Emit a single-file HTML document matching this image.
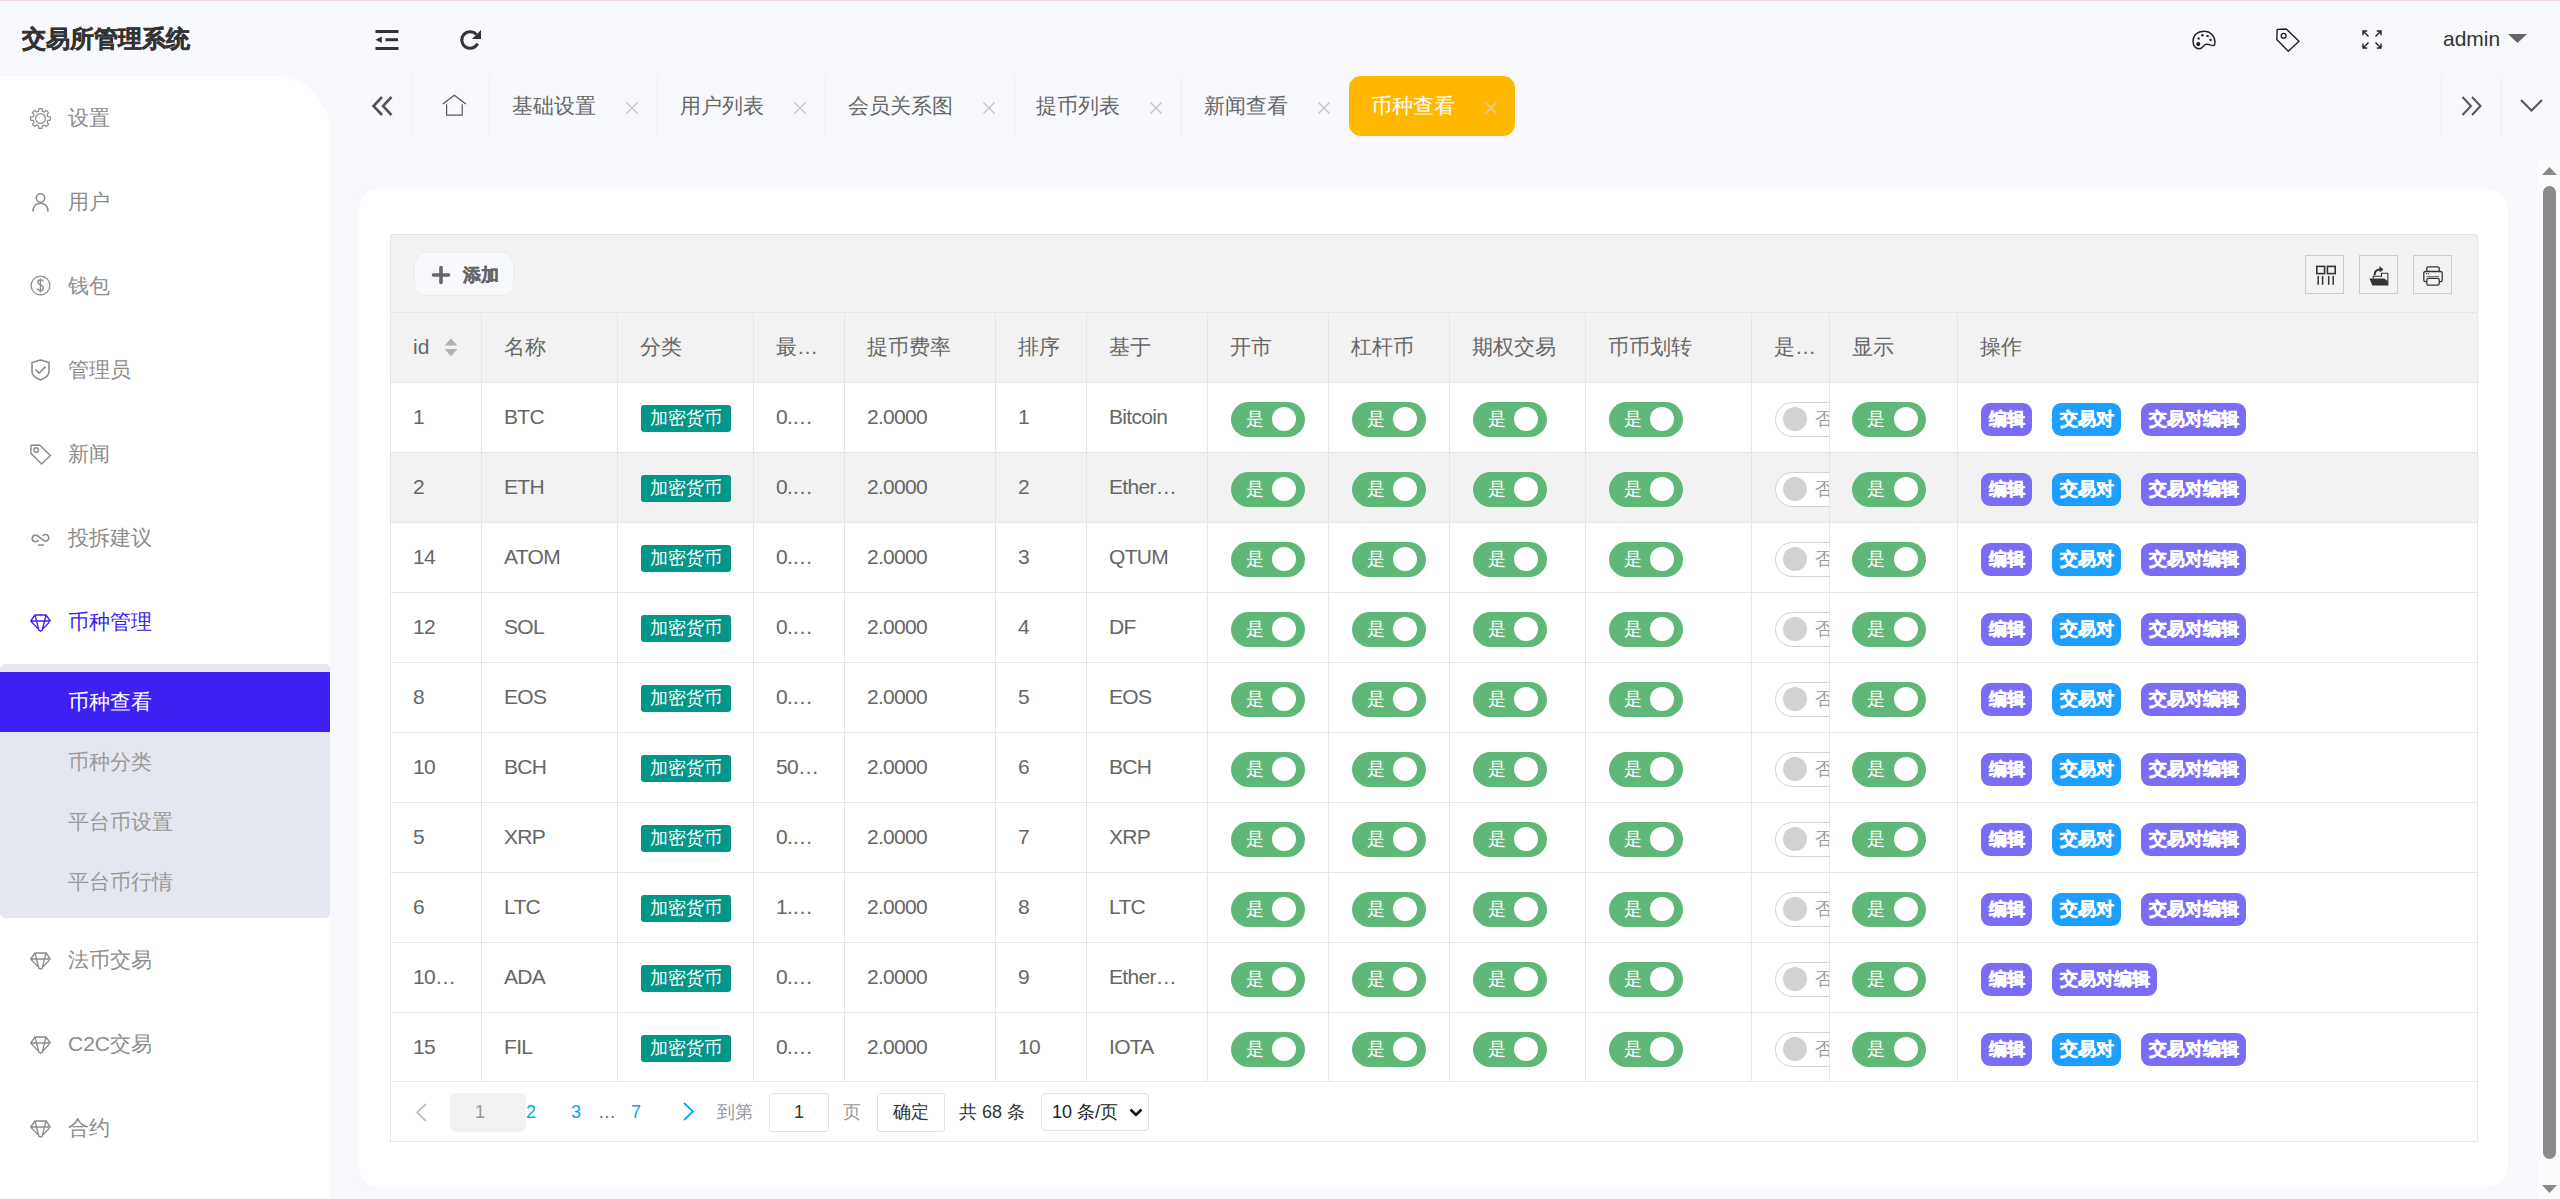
<!DOCTYPE html><html><head><meta charset="utf-8"><style>
*{margin:0;padding:0;box-sizing:border-box}
html,body{width:2560px;height:1199px;overflow:hidden;background:#f8f9fd;font-family:"Liberation Sans", sans-serif;color:#666}
.a{position:absolute;white-space:nowrap}
svg{position:absolute;overflow:visible}
</style></head><body>
<div class="a" style="left:0;top:0;width:2560px;height:1px;background:#f2d9dd"></div>
<div class="a" style="left:22px;top:20px;line-height:38px;font-size:24px;font-weight:bold;color:#333;-webkit-text-stroke:0.5px #333">交易所管理系统</div>
<svg style="left:375px;top:29px" width="24" height="22" viewBox="0 0 24 22">
<rect x="0.5" y="1" width="23" height="3" fill="#333"/><rect x="10.5" y="9.2" width="12.5" height="3" fill="#333"/><rect x="0.5" y="18" width="23" height="3" fill="#333"/>
<path d="M0.5 10.7 L6.8 7.6 L6.8 14 Z" fill="#333"/></svg>
<svg style="left:460px;top:29px" width="22" height="22" viewBox="0 0 22 22">
<path d="M17.6 14.6 A8.3 8.3 0 1 1 16.4 5.6" fill="none" stroke="#333" stroke-width="3"/>
<path d="M21 1 L21 10 L12 10 Z" fill="#333"/></svg>
<svg style="left:2192px;top:30px" width="24" height="20" viewBox="0 0 24 20">
<path d="M12 1.2 C5.5 1.2 1 5.6 1 11.2 C1 16 3.8 18.8 7 18.8 C9.8 18.8 10.6 16.8 12.3 15.2 C14.2 13.4 16.8 14.2 19 15.1 C21.4 16 23 15.6 23 12.4 C23 6 18.5 1.2 12 1.2 Z" fill="none" stroke="#222" stroke-width="1.4"/>
<circle cx="6.6" cy="8.5" r="1.2" fill="#222"/><circle cx="10.4" cy="5.3" r="1.2" fill="#222"/><circle cx="15.6" cy="5.9" r="1.2" fill="#222"/><circle cx="18.6" cy="9.9" r="1.2" fill="#222"/><circle cx="6.3" cy="14.1" r="2.1" fill="#222"/></svg>
<svg style="left:2276px;top:28px" width="24" height="24" viewBox="0 0 24 24">
<path d="M1.2 1.4 L10.3 1 L23 13.2 L12.3 23.2 L0.8 11.6 Z" fill="none" stroke="#222" stroke-width="1.4" stroke-linejoin="round"/>
<circle cx="7.6" cy="7.8" r="2.4" fill="none" stroke="#222" stroke-width="1.4"/></svg>
<svg style="left:2362px;top:30px" width="20" height="19" viewBox="0 0 20 19">
<g fill="none" stroke="#222" stroke-width="1.4">
<path d="M1 5.2 V1 H5.2 M1 1 L6.5 6.4"/><path d="M14.8 1 H19 V5.2 M19 1 L13.5 6.4"/>
<path d="M1 13.6 V18 H5.2 M1 18 L6.5 12.6"/><path d="M14.8 18 H19 V13.6 M19 18 L13.5 12.6"/></g></svg>
<div class="a" style="left:2443px;top:24px;line-height:30px;font-size:21px;color:#333">admin</div>
<svg style="left:2508px;top:34px" width="19" height="9" viewBox="0 0 19 9"><path d="M0 0 H19 L9.5 9 Z" fill="#666"/></svg>
<div class="a" style="left:0;top:76px;width:330px;height:1123px;background:#fff;border-top-right-radius:56px"></div>
<svg style="left:30px;top:108px" width="21" height="21" viewBox="0 0 21 21"><path d="M7.67 3.66 L8.58 3.35 L8.94 0.62 L12.06 0.62 L12.42 3.35 L13.33 3.66 L14.20 4.09 L16.38 2.41 L18.59 4.62 L16.91 6.80 L17.34 7.67 L17.65 8.58 L20.38 8.94 L20.38 12.06 L17.65 12.42 L17.34 13.33 L16.91 14.20 L18.59 16.38 L16.38 18.59 L14.20 16.91 L13.33 17.34 L12.42 17.65 L12.06 20.38 L8.94 20.38 L8.58 17.65 L7.67 17.34 L6.80 16.91 L4.62 18.59 L2.41 16.38 L4.09 14.20 L3.66 13.33 L3.35 12.42 L0.62 12.06 L0.62 8.94 L3.35 8.58 L3.66 7.67 L4.09 6.80 L2.41 4.62 L4.62 2.41 L6.80 4.09 Z" fill="none" stroke="#8c8c8c" stroke-width="1.2" stroke-linejoin="round"/><circle cx="10.5" cy="10.5" r="4.9" fill="none" stroke="#8c8c8c" stroke-width="1.2"/></svg>
<div class="a" style="left:68px;top:97px;line-height:42px;font-size:21px;color:#8c8c8c">设置</div>
<svg style="left:32px;top:193px" width="17" height="19" viewBox="0 0 17 19"><circle cx="8.5" cy="5" r="4.2" fill="none" stroke="#8c8c8c" stroke-width="1.6"/><path d="M1 18.5 C1 13 4.2 10.2 8.5 10.2 C12.8 10.2 16 13 16 18.5" fill="none" stroke="#8c8c8c" stroke-width="1.6"/></svg>
<div class="a" style="left:68px;top:181px;line-height:42px;font-size:21px;color:#8c8c8c">用户</div>
<svg style="left:30px;top:275px" width="21" height="21" viewBox="0 0 21 21"><circle cx="10.5" cy="10.5" r="9.4" fill="none" stroke="#8c8c8c" stroke-width="1.3"/><path d="M13.2 6.6 C12.7 5.3 11.7 4.8 10.4 4.8 C8.7 4.8 7.7 5.8 7.7 7.2 C7.7 10.4 13.4 9.4 13.4 13 C13.4 14.6 12.2 15.7 10.4 15.7 C8.8 15.7 7.7 14.9 7.4 13.4 M10.4 3.2 V17.5" fill="none" stroke="#8c8c8c" stroke-width="1.3"/></svg>
<div class="a" style="left:68px;top:265px;line-height:42px;font-size:21px;color:#8c8c8c">钱包</div>
<svg style="left:31px;top:359px" width="19" height="22" viewBox="0 0 19 22"><path d="M9.5 1 L18 3.6 V13 C18 16.6 14 19 9.5 21 C5 19 1 16.6 1 13 V3.6 Z" fill="none" stroke="#8c8c8c" stroke-width="1.6" stroke-linejoin="round"/><path d="M4.6 10.4 L8.1 14 L14.5 7.6" fill="none" stroke="#8c8c8c" stroke-width="1.6"/></svg>
<div class="a" style="left:68px;top:349px;line-height:42px;font-size:21px;color:#8c8c8c">管理员</div>
<svg style="left:30px;top:444px" width="21" height="21" viewBox="0 0 21 21"><path d="M1 1.2 L9.5 1 L20.4 11.5 L11.6 20 L0.8 9.3 Z" fill="none" stroke="#8c8c8c" stroke-width="1.5" stroke-linejoin="round"/><circle cx="6.2" cy="6" r="2.3" fill="none" stroke="#8c8c8c" stroke-width="1.4"/></svg>
<div class="a" style="left:68px;top:433px;line-height:42px;font-size:21px;color:#8c8c8c">新闻</div>
<svg style="left:31px;top:534px" width="19" height="12" viewBox="0 0 19 12"><path d="M7.4 6 A3.3 3.3 0 1 1 4.6 1.1 C6.2 1.1 7 2 9.5 4.1 C12 6.2 12.8 7.1 14.4 7.1 A3.3 3.3 0 1 0 11.6 2.1" fill="none" stroke="#8c8c8c" stroke-width="1.6"/><rect x="7.1" y="10.3" width="5.9" height="1.5" fill="#8c8c8c"/></svg>
<div class="a" style="left:68px;top:517px;line-height:42px;font-size:21px;color:#8c8c8c">投拆建议</div>
<svg style="left:30px;top:614px" width="21" height="18" viewBox="0 0 21 18"><path d="M5 1 H16 L20.3 7 H0.7 Z M0.7 7 L10.5 17.4 L19.3 8.2 M5 1 L9.1 17 M16 1 L12 17" fill="none" stroke="#3d21f2" stroke-width="1.3" stroke-linejoin="round"/></svg>
<div class="a" style="left:68px;top:601px;line-height:42px;font-size:21px;color:#3d21f2">币种管理</div>
<div class="a" style="left:0;top:664px;width:330px;height:254px;background:#e4e7ef;border-radius:5px"></div>
<div class="a" style="left:0;top:672px;width:330px;height:60px;background:#3d21f2"></div>
<div class="a" style="left:68px;top:681px;line-height:42px;font-size:21px;color:#fff">币种查看</div>
<div class="a" style="left:68px;top:741px;line-height:42px;font-size:21px;color:#999">币种分类</div>
<div class="a" style="left:68px;top:801px;line-height:42px;font-size:21px;color:#999">平台币设置</div>
<div class="a" style="left:68px;top:861px;line-height:42px;font-size:21px;color:#999">平台币行情</div>
<svg style="left:30px;top:952px" width="21" height="18" viewBox="0 0 21 18"><path d="M5 1 H16 L20.3 7 H0.7 Z M0.7 7 L10.5 17.4 L19.3 8.2 M5 1 L9.1 17 M16 1 L12 17" fill="none" stroke="#8c8c8c" stroke-width="1.3" stroke-linejoin="round"/></svg>
<div class="a" style="left:68px;top:939px;line-height:42px;font-size:21px;color:#8c8c8c">法币交易</div>
<svg style="left:30px;top:1036px" width="21" height="18" viewBox="0 0 21 18"><path d="M5 1 H16 L20.3 7 H0.7 Z M0.7 7 L10.5 17.4 L19.3 8.2 M5 1 L9.1 17 M16 1 L12 17" fill="none" stroke="#8c8c8c" stroke-width="1.3" stroke-linejoin="round"/></svg>
<div class="a" style="left:68px;top:1023px;line-height:42px;font-size:21px;color:#8c8c8c">C2C交易</div>
<svg style="left:30px;top:1120px" width="21" height="18" viewBox="0 0 21 18"><path d="M5 1 H16 L20.3 7 H0.7 Z M0.7 7 L10.5 17.4 L19.3 8.2 M5 1 L9.1 17 M16 1 L12 17" fill="none" stroke="#8c8c8c" stroke-width="1.3" stroke-linejoin="round"/></svg>
<div class="a" style="left:68px;top:1107px;line-height:42px;font-size:21px;color:#8c8c8c">合约</div>
<svg style="left:372px;top:96px" width="21" height="20" viewBox="0 0 21 20"><path d="M10 1 L1.5 10 L10 19 M19.5 1 L11 10 L19.5 19" fill="none" stroke="#555" stroke-width="2.6"/></svg>
<div class="a" style="left:412px;top:76px;width:1px;height:60px;background:#efeff1"></div>
<svg style="left:442px;top:94px" width="25" height="22" viewBox="0 0 25 22"><path d="M0.8 10 L12.3 1.3 L23.8 10" fill="none" stroke="#555" stroke-width="1.3"/><path d="M4.6 10.2 V21.1 H20.2 V10.2" fill="none" stroke="#555" stroke-width="1.2"/></svg>
<div class="a" style="left:489px;top:76px;width:1px;height:60px;background:#efeff1"></div>
<div class="a" style="left:512px;top:85px;line-height:42px;font-size:21px;color:#666">基础设置</div>
<svg style="left:626px;top:102px" width="12" height="12" viewBox="0 0 12 12"><path d="M0.5 0.5 L11.5 11.5 M11.5 0.5 L0.5 11.5" fill="none" stroke="#c2c2c2" stroke-width="1.2"/></svg>
<div class="a" style="left:657px;top:76px;width:1px;height:60px;background:#efeff1"></div>
<div class="a" style="left:680px;top:85px;line-height:42px;font-size:21px;color:#666">用户列表</div>
<svg style="left:794px;top:102px" width="12" height="12" viewBox="0 0 12 12"><path d="M0.5 0.5 L11.5 11.5 M11.5 0.5 L0.5 11.5" fill="none" stroke="#c2c2c2" stroke-width="1.2"/></svg>
<div class="a" style="left:825px;top:76px;width:1px;height:60px;background:#efeff1"></div>
<div class="a" style="left:848px;top:85px;line-height:42px;font-size:21px;color:#666">会员关系图</div>
<svg style="left:983px;top:102px" width="12" height="12" viewBox="0 0 12 12"><path d="M0.5 0.5 L11.5 11.5 M11.5 0.5 L0.5 11.5" fill="none" stroke="#c2c2c2" stroke-width="1.2"/></svg>
<div class="a" style="left:1014px;top:76px;width:1px;height:60px;background:#efeff1"></div>
<div class="a" style="left:1036px;top:85px;line-height:42px;font-size:21px;color:#666">提币列表</div>
<svg style="left:1150px;top:102px" width="12" height="12" viewBox="0 0 12 12"><path d="M0.5 0.5 L11.5 11.5 M11.5 0.5 L0.5 11.5" fill="none" stroke="#c2c2c2" stroke-width="1.2"/></svg>
<div class="a" style="left:1181px;top:76px;width:1px;height:60px;background:#efeff1"></div>
<div class="a" style="left:1204px;top:85px;line-height:42px;font-size:21px;color:#666">新闻查看</div>
<svg style="left:1318px;top:102px" width="12" height="12" viewBox="0 0 12 12"><path d="M0.5 0.5 L11.5 11.5 M11.5 0.5 L0.5 11.5" fill="none" stroke="#c2c2c2" stroke-width="1.2"/></svg>
<div class="a" style="left:1349px;top:76px;width:1px;height:60px;background:#efeff1"></div>
<div class="a" style="left:1349px;top:76px;width:166px;height:60px;background:#ffb800;border-radius:12px"></div>
<div class="a" style="left:1371px;top:85px;line-height:42px;font-size:21px;color:#fff">币种查看</div>
<svg style="left:1485px;top:102px" width="12" height="12" viewBox="0 0 12 12"><path d="M0.5 0.5 L11.5 11.5 M11.5 0.5 L0.5 11.5" fill="none" stroke="#cfcfd8" stroke-width="1.2"/></svg>
<div class="a" style="left:2441px;top:76px;width:1px;height:60px;background:#efeff1"></div>
<svg style="left:2461px;top:96px" width="21" height="20" viewBox="0 0 21 20"><path d="M1.5 1 L10 10 L1.5 19 M11 1 L19.5 10 L11 19" fill="none" stroke="#555" stroke-width="2"/></svg>
<div class="a" style="left:2501px;top:76px;width:1px;height:60px;background:#efeff1"></div>
<svg style="left:2520px;top:99px" width="23" height="13" viewBox="0 0 23 13"><path d="M1 1 L11.5 11.5 L22 1" fill="none" stroke="#555" stroke-width="2"/></svg>
<div class="a" style="left:359px;top:189px;width:2149px;height:998px;background:#fff;border-radius:18px;box-shadow:0 0 2px rgba(0,0,0,0.04)"></div>
<div class="a" style="left:390px;top:234px;width:2088px;height:908px;border:1px solid #e6e6e6;background:#fff"></div>
<div class="a" style="left:391px;top:235px;width:2086px;height:77px;background:#f2f2f2"></div>
<div class="a" style="left:391px;top:312px;width:2086px;height:70px;background:#f2f2f2;border-top:1px solid #e6e6e6"></div>
<div class="a" style="left:414px;top:252px;width:100px;height:44px;background:#f8f9fd;border:1px solid #e8eef0;border-radius:12px"></div>
<svg style="left:432px;top:266px" width="18" height="18" viewBox="0 0 18 18"><path d="M9 1.5 V16.5 M1.5 9 H16.5" stroke="#666" stroke-width="3.6" stroke-linecap="round"/></svg>
<div class="a" style="left:463px;top:254px;line-height:42px;font-size:18px;font-weight:bold;color:#666;-webkit-text-stroke:0.4px #666">添加</div>
<div class="a" style="left:2305px;top:255px;width:39px;height:39px;border:1.5px solid #ccc"></div>
<div class="a" style="left:2359px;top:255px;width:39px;height:39px;border:1.5px solid #ccc"></div>
<div class="a" style="left:2413px;top:255px;width:39px;height:39px;border:1.5px solid #ccc"></div>
<svg style="left:2316px;top:265px" width="20" height="21" viewBox="0 0 20 21"><g fill="none" stroke="#333" stroke-width="1.6"><rect x="0.8" y="1.4" width="7.8" height="7.2"/><rect x="11.4" y="1.4" width="7.8" height="7.2"/></g>
<g stroke="#333" stroke-width="1.5"><path d="M2.2 11 V19.8 M6.6 11 V19.8 M12.7 11 V19.8 M17.2 11 V19.8"/></g></svg>
<svg style="left:2369px;top:265px" width="19" height="21" viewBox="0 0 19 21"><path d="M4.2 13.6 V11.2 H12.5 V8.2 H18.8 V20.6" fill="none" stroke="#333" stroke-width="1.1"/><path d="M0.4 13.6 H15.6 L18.8 16.4 V20.6 H3.4 Z" fill="#333"/><path d="M5.6 10.2 C5.4 6.6 7.6 4.5 11 4.5" fill="none" stroke="#333" stroke-width="2.1"/><path d="M10.4 1.1 L14.4 4.5 L10.7 7.4 Z" fill="#333"/></svg>
<svg style="left:2423px;top:266px" width="20" height="20" viewBox="0 0 20 20"><g fill="none" stroke="#333" stroke-width="1.3"><path d="M3.8 5.5 V2.5 C3.8 1.5 4.4 0.9 5.4 0.9 H14.6 C15.6 0.9 16.2 1.5 16.2 2.5 V5.5"/><path d="M3.8 15.6 H2.4 C1.4 15.6 0.8 15 0.8 14 V7.1 C0.8 6.1 1.4 5.5 2.4 5.5 H17.6 C18.6 5.5 19.2 6.1 19.2 7.1 V14 C19.2 15 18.6 15.6 17.6 15.6 H16.2"/><rect x="3.8" y="12.3" width="12.4" height="6.9" rx="1.6"/></g><circle cx="3.6" cy="7.7" r="0.7" fill="#333"/><circle cx="5.6" cy="7.7" r="0.7" fill="#333"/><path d="M3.6 10.6 H16" stroke="#555" stroke-width="0.9"/></svg>
<div class="a" style="left:413px;top:312px;line-height:70px;font-size:21px;color:#666">id</div>
<div class="a" style="left:504px;top:312px;line-height:70px;font-size:21px;color:#666">名称</div>
<div class="a" style="left:640px;top:312px;line-height:70px;font-size:21px;color:#666">分类</div>
<div class="a" style="left:776px;top:312px;line-height:70px;font-size:21px;color:#666">最…</div>
<div class="a" style="left:867px;top:312px;line-height:70px;font-size:21px;color:#666">提币费率</div>
<div class="a" style="left:1018px;top:312px;line-height:70px;font-size:21px;color:#666">排序</div>
<div class="a" style="left:1109px;top:312px;line-height:70px;font-size:21px;color:#666">基于</div>
<div class="a" style="left:1230px;top:312px;line-height:70px;font-size:21px;color:#666">开市</div>
<div class="a" style="left:1351px;top:312px;line-height:70px;font-size:21px;color:#666">杠杆币</div>
<div class="a" style="left:1472px;top:312px;line-height:70px;font-size:21px;color:#666">期权交易</div>
<div class="a" style="left:1608px;top:312px;line-height:70px;font-size:21px;color:#666">币币划转</div>
<div class="a" style="left:1774px;top:312px;line-height:70px;font-size:21px;color:#666">是…</div>
<div class="a" style="left:1852px;top:312px;line-height:70px;font-size:21px;color:#666">显示</div>
<div class="a" style="left:1980px;top:312px;line-height:70px;font-size:21px;color:#666">操作</div>
<svg style="left:444px;top:338px" width="14" height="19" viewBox="0 0 14 19"><path d="M7 0.5 L13.5 7.5 H0.5 Z M0.5 11 H13.5 L7 18.3 Z" fill="#b2b2b2"/></svg>
<div class="a" style="left:391px;top:452px;width:2086px;height:70px;background:#f2f2f2"></div>
<div class="a" style="left:391px;top:382px;width:2086px;height:1px;background:#e6e6e6"></div>
<div class="a" style="left:391px;top:452px;width:2086px;height:1px;background:#e6e6e6"></div>
<div class="a" style="left:391px;top:522px;width:2086px;height:1px;background:#e6e6e6"></div>
<div class="a" style="left:391px;top:592px;width:2086px;height:1px;background:#e6e6e6"></div>
<div class="a" style="left:391px;top:662px;width:2086px;height:1px;background:#e6e6e6"></div>
<div class="a" style="left:391px;top:732px;width:2086px;height:1px;background:#e6e6e6"></div>
<div class="a" style="left:391px;top:802px;width:2086px;height:1px;background:#e6e6e6"></div>
<div class="a" style="left:391px;top:872px;width:2086px;height:1px;background:#e6e6e6"></div>
<div class="a" style="left:391px;top:942px;width:2086px;height:1px;background:#e6e6e6"></div>
<div class="a" style="left:391px;top:1012px;width:2086px;height:1px;background:#e6e6e6"></div>
<div class="a" style="left:391px;top:1081px;width:2086px;height:1px;background:#e6e6e6"></div>
<div class="a" style="left:481px;top:312px;width:1px;height:769px;background:#e6e6e6"></div>
<div class="a" style="left:617px;top:312px;width:1px;height:769px;background:#e6e6e6"></div>
<div class="a" style="left:753px;top:312px;width:1px;height:769px;background:#e6e6e6"></div>
<div class="a" style="left:844px;top:312px;width:1px;height:769px;background:#e6e6e6"></div>
<div class="a" style="left:995px;top:312px;width:1px;height:769px;background:#e6e6e6"></div>
<div class="a" style="left:1086px;top:312px;width:1px;height:769px;background:#e6e6e6"></div>
<div class="a" style="left:1207px;top:312px;width:1px;height:769px;background:#e6e6e6"></div>
<div class="a" style="left:1328px;top:312px;width:1px;height:769px;background:#e6e6e6"></div>
<div class="a" style="left:1449px;top:312px;width:1px;height:769px;background:#e6e6e6"></div>
<div class="a" style="left:1585px;top:312px;width:1px;height:769px;background:#e6e6e6"></div>
<div class="a" style="left:1751px;top:312px;width:1px;height:769px;background:#e6e6e6"></div>
<div class="a" style="left:1829px;top:312px;width:1px;height:769px;background:#e6e6e6"></div>
<div class="a" style="left:1957px;top:312px;width:1px;height:769px;background:#e6e6e6"></div>
<div class="a" style="left:413px;top:382px;line-height:70px;font-size:21px;color:#666;letter-spacing:-0.7px">1</div>
<div class="a" style="left:504px;top:382px;line-height:70px;font-size:21px;color:#666;letter-spacing:-0.7px">BTC</div>
<div class="a" style="left:776px;top:382px;line-height:70px;font-size:21px;color:#666;letter-spacing:-0.7px">0.…</div>
<div class="a" style="left:867px;top:382px;line-height:70px;font-size:21px;color:#666;letter-spacing:-0.7px">2.0000</div>
<div class="a" style="left:1018px;top:382px;line-height:70px;font-size:21px;color:#666;letter-spacing:-0.7px">1</div>
<div class="a" style="left:1109px;top:382px;line-height:70px;font-size:21px;color:#666;letter-spacing:-0.7px">Bitcoin</div>
<div class="a" style="left:641px;top:405px;width:90px;height:27px;background:#009688;border-radius:3px;line-height:27px;text-align:center;font-size:18px;color:#fff">加密货币</div>
<div class="a" style="left:1231px;top:402px;width:74px;height:35px;background:#5fb878;border-radius:18px"></div>
<div class="a" style="left:1246px;top:402px;line-height:35px;font-size:18px;color:#fff">是</div>
<div class="a" style="left:1272px;top:407px;width:24px;height:24px;background:#fff;border-radius:50%"></div>
<div class="a" style="left:1352px;top:402px;width:74px;height:35px;background:#5fb878;border-radius:18px"></div>
<div class="a" style="left:1367px;top:402px;line-height:35px;font-size:18px;color:#fff">是</div>
<div class="a" style="left:1393px;top:407px;width:24px;height:24px;background:#fff;border-radius:50%"></div>
<div class="a" style="left:1473px;top:402px;width:74px;height:35px;background:#5fb878;border-radius:18px"></div>
<div class="a" style="left:1488px;top:402px;line-height:35px;font-size:18px;color:#fff">是</div>
<div class="a" style="left:1514px;top:407px;width:24px;height:24px;background:#fff;border-radius:50%"></div>
<div class="a" style="left:1609px;top:402px;width:74px;height:35px;background:#5fb878;border-radius:18px"></div>
<div class="a" style="left:1624px;top:402px;line-height:35px;font-size:18px;color:#fff">是</div>
<div class="a" style="left:1650px;top:407px;width:24px;height:24px;background:#fff;border-radius:50%"></div>
<div class="a" style="left:1752px;top:383px;width:77px;height:69px;overflow:hidden">
<div class="a" style="left:23px;top:19px;width:74px;height:35px;border:1px solid #d2d2d2;background:#fff;border-radius:18px"></div>
<div class="a" style="left:31px;top:24px;width:24px;height:24px;background:#d2d2d2;border-radius:50%"></div>
<div class="a" style="left:63px;top:19px;line-height:35px;font-size:18px;color:#999">否</div>
</div>
<div class="a" style="left:1852px;top:402px;width:74px;height:35px;background:#5fb878;border-radius:18px"></div>
<div class="a" style="left:1867px;top:402px;line-height:35px;font-size:18px;color:#fff">是</div>
<div class="a" style="left:1894px;top:407px;width:24px;height:24px;background:#fff;border-radius:50%"></div>
<div class="a" style="left:1981px;top:403px;width:51px;height:33px;background:#7b6cf5;border-radius:9px;line-height:32px;text-align:center;font-size:18px;font-weight:bold;color:#fff;-webkit-text-stroke:0.5px #fff">编辑</div>
<div class="a" style="left:2052px;top:403px;width:69px;height:33px;background:#1e9fff;border-radius:9px;line-height:32px;text-align:center;font-size:18px;font-weight:bold;color:#fff;-webkit-text-stroke:0.5px #fff">交易对</div>
<div class="a" style="left:2141px;top:403px;width:105px;height:33px;background:#7b6cf5;border-radius:9px;line-height:32px;text-align:center;font-size:18px;font-weight:bold;color:#fff;-webkit-text-stroke:0.5px #fff">交易对编辑</div>
<div class="a" style="left:413px;top:452px;line-height:70px;font-size:21px;color:#666;letter-spacing:-0.7px">2</div>
<div class="a" style="left:504px;top:452px;line-height:70px;font-size:21px;color:#666;letter-spacing:-0.7px">ETH</div>
<div class="a" style="left:776px;top:452px;line-height:70px;font-size:21px;color:#666;letter-spacing:-0.7px">0.…</div>
<div class="a" style="left:867px;top:452px;line-height:70px;font-size:21px;color:#666;letter-spacing:-0.7px">2.0000</div>
<div class="a" style="left:1018px;top:452px;line-height:70px;font-size:21px;color:#666;letter-spacing:-0.7px">2</div>
<div class="a" style="left:1109px;top:452px;line-height:70px;font-size:21px;color:#666;letter-spacing:-0.7px">Ether…</div>
<div class="a" style="left:641px;top:475px;width:90px;height:27px;background:#009688;border-radius:3px;line-height:27px;text-align:center;font-size:18px;color:#fff">加密货币</div>
<div class="a" style="left:1231px;top:472px;width:74px;height:35px;background:#5fb878;border-radius:18px"></div>
<div class="a" style="left:1246px;top:472px;line-height:35px;font-size:18px;color:#fff">是</div>
<div class="a" style="left:1272px;top:477px;width:24px;height:24px;background:#fff;border-radius:50%"></div>
<div class="a" style="left:1352px;top:472px;width:74px;height:35px;background:#5fb878;border-radius:18px"></div>
<div class="a" style="left:1367px;top:472px;line-height:35px;font-size:18px;color:#fff">是</div>
<div class="a" style="left:1393px;top:477px;width:24px;height:24px;background:#fff;border-radius:50%"></div>
<div class="a" style="left:1473px;top:472px;width:74px;height:35px;background:#5fb878;border-radius:18px"></div>
<div class="a" style="left:1488px;top:472px;line-height:35px;font-size:18px;color:#fff">是</div>
<div class="a" style="left:1514px;top:477px;width:24px;height:24px;background:#fff;border-radius:50%"></div>
<div class="a" style="left:1609px;top:472px;width:74px;height:35px;background:#5fb878;border-radius:18px"></div>
<div class="a" style="left:1624px;top:472px;line-height:35px;font-size:18px;color:#fff">是</div>
<div class="a" style="left:1650px;top:477px;width:24px;height:24px;background:#fff;border-radius:50%"></div>
<div class="a" style="left:1752px;top:453px;width:77px;height:69px;overflow:hidden">
<div class="a" style="left:23px;top:19px;width:74px;height:35px;border:1px solid #d2d2d2;background:#fff;border-radius:18px"></div>
<div class="a" style="left:31px;top:24px;width:24px;height:24px;background:#d2d2d2;border-radius:50%"></div>
<div class="a" style="left:63px;top:19px;line-height:35px;font-size:18px;color:#999">否</div>
</div>
<div class="a" style="left:1852px;top:472px;width:74px;height:35px;background:#5fb878;border-radius:18px"></div>
<div class="a" style="left:1867px;top:472px;line-height:35px;font-size:18px;color:#fff">是</div>
<div class="a" style="left:1894px;top:477px;width:24px;height:24px;background:#fff;border-radius:50%"></div>
<div class="a" style="left:1981px;top:473px;width:51px;height:33px;background:#7b6cf5;border-radius:9px;line-height:32px;text-align:center;font-size:18px;font-weight:bold;color:#fff;-webkit-text-stroke:0.5px #fff">编辑</div>
<div class="a" style="left:2052px;top:473px;width:69px;height:33px;background:#1e9fff;border-radius:9px;line-height:32px;text-align:center;font-size:18px;font-weight:bold;color:#fff;-webkit-text-stroke:0.5px #fff">交易对</div>
<div class="a" style="left:2141px;top:473px;width:105px;height:33px;background:#7b6cf5;border-radius:9px;line-height:32px;text-align:center;font-size:18px;font-weight:bold;color:#fff;-webkit-text-stroke:0.5px #fff">交易对编辑</div>
<div class="a" style="left:413px;top:522px;line-height:70px;font-size:21px;color:#666;letter-spacing:-0.7px">14</div>
<div class="a" style="left:504px;top:522px;line-height:70px;font-size:21px;color:#666;letter-spacing:-0.7px">ATOM</div>
<div class="a" style="left:776px;top:522px;line-height:70px;font-size:21px;color:#666;letter-spacing:-0.7px">0.…</div>
<div class="a" style="left:867px;top:522px;line-height:70px;font-size:21px;color:#666;letter-spacing:-0.7px">2.0000</div>
<div class="a" style="left:1018px;top:522px;line-height:70px;font-size:21px;color:#666;letter-spacing:-0.7px">3</div>
<div class="a" style="left:1109px;top:522px;line-height:70px;font-size:21px;color:#666;letter-spacing:-0.7px">QTUM</div>
<div class="a" style="left:641px;top:545px;width:90px;height:27px;background:#009688;border-radius:3px;line-height:27px;text-align:center;font-size:18px;color:#fff">加密货币</div>
<div class="a" style="left:1231px;top:542px;width:74px;height:35px;background:#5fb878;border-radius:18px"></div>
<div class="a" style="left:1246px;top:542px;line-height:35px;font-size:18px;color:#fff">是</div>
<div class="a" style="left:1272px;top:547px;width:24px;height:24px;background:#fff;border-radius:50%"></div>
<div class="a" style="left:1352px;top:542px;width:74px;height:35px;background:#5fb878;border-radius:18px"></div>
<div class="a" style="left:1367px;top:542px;line-height:35px;font-size:18px;color:#fff">是</div>
<div class="a" style="left:1393px;top:547px;width:24px;height:24px;background:#fff;border-radius:50%"></div>
<div class="a" style="left:1473px;top:542px;width:74px;height:35px;background:#5fb878;border-radius:18px"></div>
<div class="a" style="left:1488px;top:542px;line-height:35px;font-size:18px;color:#fff">是</div>
<div class="a" style="left:1514px;top:547px;width:24px;height:24px;background:#fff;border-radius:50%"></div>
<div class="a" style="left:1609px;top:542px;width:74px;height:35px;background:#5fb878;border-radius:18px"></div>
<div class="a" style="left:1624px;top:542px;line-height:35px;font-size:18px;color:#fff">是</div>
<div class="a" style="left:1650px;top:547px;width:24px;height:24px;background:#fff;border-radius:50%"></div>
<div class="a" style="left:1752px;top:523px;width:77px;height:69px;overflow:hidden">
<div class="a" style="left:23px;top:19px;width:74px;height:35px;border:1px solid #d2d2d2;background:#fff;border-radius:18px"></div>
<div class="a" style="left:31px;top:24px;width:24px;height:24px;background:#d2d2d2;border-radius:50%"></div>
<div class="a" style="left:63px;top:19px;line-height:35px;font-size:18px;color:#999">否</div>
</div>
<div class="a" style="left:1852px;top:542px;width:74px;height:35px;background:#5fb878;border-radius:18px"></div>
<div class="a" style="left:1867px;top:542px;line-height:35px;font-size:18px;color:#fff">是</div>
<div class="a" style="left:1894px;top:547px;width:24px;height:24px;background:#fff;border-radius:50%"></div>
<div class="a" style="left:1981px;top:543px;width:51px;height:33px;background:#7b6cf5;border-radius:9px;line-height:32px;text-align:center;font-size:18px;font-weight:bold;color:#fff;-webkit-text-stroke:0.5px #fff">编辑</div>
<div class="a" style="left:2052px;top:543px;width:69px;height:33px;background:#1e9fff;border-radius:9px;line-height:32px;text-align:center;font-size:18px;font-weight:bold;color:#fff;-webkit-text-stroke:0.5px #fff">交易对</div>
<div class="a" style="left:2141px;top:543px;width:105px;height:33px;background:#7b6cf5;border-radius:9px;line-height:32px;text-align:center;font-size:18px;font-weight:bold;color:#fff;-webkit-text-stroke:0.5px #fff">交易对编辑</div>
<div class="a" style="left:413px;top:592px;line-height:70px;font-size:21px;color:#666;letter-spacing:-0.7px">12</div>
<div class="a" style="left:504px;top:592px;line-height:70px;font-size:21px;color:#666;letter-spacing:-0.7px">SOL</div>
<div class="a" style="left:776px;top:592px;line-height:70px;font-size:21px;color:#666;letter-spacing:-0.7px">0.…</div>
<div class="a" style="left:867px;top:592px;line-height:70px;font-size:21px;color:#666;letter-spacing:-0.7px">2.0000</div>
<div class="a" style="left:1018px;top:592px;line-height:70px;font-size:21px;color:#666;letter-spacing:-0.7px">4</div>
<div class="a" style="left:1109px;top:592px;line-height:70px;font-size:21px;color:#666;letter-spacing:-0.7px">DF</div>
<div class="a" style="left:641px;top:615px;width:90px;height:27px;background:#009688;border-radius:3px;line-height:27px;text-align:center;font-size:18px;color:#fff">加密货币</div>
<div class="a" style="left:1231px;top:612px;width:74px;height:35px;background:#5fb878;border-radius:18px"></div>
<div class="a" style="left:1246px;top:612px;line-height:35px;font-size:18px;color:#fff">是</div>
<div class="a" style="left:1272px;top:617px;width:24px;height:24px;background:#fff;border-radius:50%"></div>
<div class="a" style="left:1352px;top:612px;width:74px;height:35px;background:#5fb878;border-radius:18px"></div>
<div class="a" style="left:1367px;top:612px;line-height:35px;font-size:18px;color:#fff">是</div>
<div class="a" style="left:1393px;top:617px;width:24px;height:24px;background:#fff;border-radius:50%"></div>
<div class="a" style="left:1473px;top:612px;width:74px;height:35px;background:#5fb878;border-radius:18px"></div>
<div class="a" style="left:1488px;top:612px;line-height:35px;font-size:18px;color:#fff">是</div>
<div class="a" style="left:1514px;top:617px;width:24px;height:24px;background:#fff;border-radius:50%"></div>
<div class="a" style="left:1609px;top:612px;width:74px;height:35px;background:#5fb878;border-radius:18px"></div>
<div class="a" style="left:1624px;top:612px;line-height:35px;font-size:18px;color:#fff">是</div>
<div class="a" style="left:1650px;top:617px;width:24px;height:24px;background:#fff;border-radius:50%"></div>
<div class="a" style="left:1752px;top:593px;width:77px;height:69px;overflow:hidden">
<div class="a" style="left:23px;top:19px;width:74px;height:35px;border:1px solid #d2d2d2;background:#fff;border-radius:18px"></div>
<div class="a" style="left:31px;top:24px;width:24px;height:24px;background:#d2d2d2;border-radius:50%"></div>
<div class="a" style="left:63px;top:19px;line-height:35px;font-size:18px;color:#999">否</div>
</div>
<div class="a" style="left:1852px;top:612px;width:74px;height:35px;background:#5fb878;border-radius:18px"></div>
<div class="a" style="left:1867px;top:612px;line-height:35px;font-size:18px;color:#fff">是</div>
<div class="a" style="left:1894px;top:617px;width:24px;height:24px;background:#fff;border-radius:50%"></div>
<div class="a" style="left:1981px;top:613px;width:51px;height:33px;background:#7b6cf5;border-radius:9px;line-height:32px;text-align:center;font-size:18px;font-weight:bold;color:#fff;-webkit-text-stroke:0.5px #fff">编辑</div>
<div class="a" style="left:2052px;top:613px;width:69px;height:33px;background:#1e9fff;border-radius:9px;line-height:32px;text-align:center;font-size:18px;font-weight:bold;color:#fff;-webkit-text-stroke:0.5px #fff">交易对</div>
<div class="a" style="left:2141px;top:613px;width:105px;height:33px;background:#7b6cf5;border-radius:9px;line-height:32px;text-align:center;font-size:18px;font-weight:bold;color:#fff;-webkit-text-stroke:0.5px #fff">交易对编辑</div>
<div class="a" style="left:413px;top:662px;line-height:70px;font-size:21px;color:#666;letter-spacing:-0.7px">8</div>
<div class="a" style="left:504px;top:662px;line-height:70px;font-size:21px;color:#666;letter-spacing:-0.7px">EOS</div>
<div class="a" style="left:776px;top:662px;line-height:70px;font-size:21px;color:#666;letter-spacing:-0.7px">0.…</div>
<div class="a" style="left:867px;top:662px;line-height:70px;font-size:21px;color:#666;letter-spacing:-0.7px">2.0000</div>
<div class="a" style="left:1018px;top:662px;line-height:70px;font-size:21px;color:#666;letter-spacing:-0.7px">5</div>
<div class="a" style="left:1109px;top:662px;line-height:70px;font-size:21px;color:#666;letter-spacing:-0.7px">EOS</div>
<div class="a" style="left:641px;top:685px;width:90px;height:27px;background:#009688;border-radius:3px;line-height:27px;text-align:center;font-size:18px;color:#fff">加密货币</div>
<div class="a" style="left:1231px;top:682px;width:74px;height:35px;background:#5fb878;border-radius:18px"></div>
<div class="a" style="left:1246px;top:682px;line-height:35px;font-size:18px;color:#fff">是</div>
<div class="a" style="left:1272px;top:687px;width:24px;height:24px;background:#fff;border-radius:50%"></div>
<div class="a" style="left:1352px;top:682px;width:74px;height:35px;background:#5fb878;border-radius:18px"></div>
<div class="a" style="left:1367px;top:682px;line-height:35px;font-size:18px;color:#fff">是</div>
<div class="a" style="left:1393px;top:687px;width:24px;height:24px;background:#fff;border-radius:50%"></div>
<div class="a" style="left:1473px;top:682px;width:74px;height:35px;background:#5fb878;border-radius:18px"></div>
<div class="a" style="left:1488px;top:682px;line-height:35px;font-size:18px;color:#fff">是</div>
<div class="a" style="left:1514px;top:687px;width:24px;height:24px;background:#fff;border-radius:50%"></div>
<div class="a" style="left:1609px;top:682px;width:74px;height:35px;background:#5fb878;border-radius:18px"></div>
<div class="a" style="left:1624px;top:682px;line-height:35px;font-size:18px;color:#fff">是</div>
<div class="a" style="left:1650px;top:687px;width:24px;height:24px;background:#fff;border-radius:50%"></div>
<div class="a" style="left:1752px;top:663px;width:77px;height:69px;overflow:hidden">
<div class="a" style="left:23px;top:19px;width:74px;height:35px;border:1px solid #d2d2d2;background:#fff;border-radius:18px"></div>
<div class="a" style="left:31px;top:24px;width:24px;height:24px;background:#d2d2d2;border-radius:50%"></div>
<div class="a" style="left:63px;top:19px;line-height:35px;font-size:18px;color:#999">否</div>
</div>
<div class="a" style="left:1852px;top:682px;width:74px;height:35px;background:#5fb878;border-radius:18px"></div>
<div class="a" style="left:1867px;top:682px;line-height:35px;font-size:18px;color:#fff">是</div>
<div class="a" style="left:1894px;top:687px;width:24px;height:24px;background:#fff;border-radius:50%"></div>
<div class="a" style="left:1981px;top:683px;width:51px;height:33px;background:#7b6cf5;border-radius:9px;line-height:32px;text-align:center;font-size:18px;font-weight:bold;color:#fff;-webkit-text-stroke:0.5px #fff">编辑</div>
<div class="a" style="left:2052px;top:683px;width:69px;height:33px;background:#1e9fff;border-radius:9px;line-height:32px;text-align:center;font-size:18px;font-weight:bold;color:#fff;-webkit-text-stroke:0.5px #fff">交易对</div>
<div class="a" style="left:2141px;top:683px;width:105px;height:33px;background:#7b6cf5;border-radius:9px;line-height:32px;text-align:center;font-size:18px;font-weight:bold;color:#fff;-webkit-text-stroke:0.5px #fff">交易对编辑</div>
<div class="a" style="left:413px;top:732px;line-height:70px;font-size:21px;color:#666;letter-spacing:-0.7px">10</div>
<div class="a" style="left:504px;top:732px;line-height:70px;font-size:21px;color:#666;letter-spacing:-0.7px">BCH</div>
<div class="a" style="left:776px;top:732px;line-height:70px;font-size:21px;color:#666;letter-spacing:-0.7px">50…</div>
<div class="a" style="left:867px;top:732px;line-height:70px;font-size:21px;color:#666;letter-spacing:-0.7px">2.0000</div>
<div class="a" style="left:1018px;top:732px;line-height:70px;font-size:21px;color:#666;letter-spacing:-0.7px">6</div>
<div class="a" style="left:1109px;top:732px;line-height:70px;font-size:21px;color:#666;letter-spacing:-0.7px">BCH</div>
<div class="a" style="left:641px;top:755px;width:90px;height:27px;background:#009688;border-radius:3px;line-height:27px;text-align:center;font-size:18px;color:#fff">加密货币</div>
<div class="a" style="left:1231px;top:752px;width:74px;height:35px;background:#5fb878;border-radius:18px"></div>
<div class="a" style="left:1246px;top:752px;line-height:35px;font-size:18px;color:#fff">是</div>
<div class="a" style="left:1272px;top:757px;width:24px;height:24px;background:#fff;border-radius:50%"></div>
<div class="a" style="left:1352px;top:752px;width:74px;height:35px;background:#5fb878;border-radius:18px"></div>
<div class="a" style="left:1367px;top:752px;line-height:35px;font-size:18px;color:#fff">是</div>
<div class="a" style="left:1393px;top:757px;width:24px;height:24px;background:#fff;border-radius:50%"></div>
<div class="a" style="left:1473px;top:752px;width:74px;height:35px;background:#5fb878;border-radius:18px"></div>
<div class="a" style="left:1488px;top:752px;line-height:35px;font-size:18px;color:#fff">是</div>
<div class="a" style="left:1514px;top:757px;width:24px;height:24px;background:#fff;border-radius:50%"></div>
<div class="a" style="left:1609px;top:752px;width:74px;height:35px;background:#5fb878;border-radius:18px"></div>
<div class="a" style="left:1624px;top:752px;line-height:35px;font-size:18px;color:#fff">是</div>
<div class="a" style="left:1650px;top:757px;width:24px;height:24px;background:#fff;border-radius:50%"></div>
<div class="a" style="left:1752px;top:733px;width:77px;height:69px;overflow:hidden">
<div class="a" style="left:23px;top:19px;width:74px;height:35px;border:1px solid #d2d2d2;background:#fff;border-radius:18px"></div>
<div class="a" style="left:31px;top:24px;width:24px;height:24px;background:#d2d2d2;border-radius:50%"></div>
<div class="a" style="left:63px;top:19px;line-height:35px;font-size:18px;color:#999">否</div>
</div>
<div class="a" style="left:1852px;top:752px;width:74px;height:35px;background:#5fb878;border-radius:18px"></div>
<div class="a" style="left:1867px;top:752px;line-height:35px;font-size:18px;color:#fff">是</div>
<div class="a" style="left:1894px;top:757px;width:24px;height:24px;background:#fff;border-radius:50%"></div>
<div class="a" style="left:1981px;top:753px;width:51px;height:33px;background:#7b6cf5;border-radius:9px;line-height:32px;text-align:center;font-size:18px;font-weight:bold;color:#fff;-webkit-text-stroke:0.5px #fff">编辑</div>
<div class="a" style="left:2052px;top:753px;width:69px;height:33px;background:#1e9fff;border-radius:9px;line-height:32px;text-align:center;font-size:18px;font-weight:bold;color:#fff;-webkit-text-stroke:0.5px #fff">交易对</div>
<div class="a" style="left:2141px;top:753px;width:105px;height:33px;background:#7b6cf5;border-radius:9px;line-height:32px;text-align:center;font-size:18px;font-weight:bold;color:#fff;-webkit-text-stroke:0.5px #fff">交易对编辑</div>
<div class="a" style="left:413px;top:802px;line-height:70px;font-size:21px;color:#666;letter-spacing:-0.7px">5</div>
<div class="a" style="left:504px;top:802px;line-height:70px;font-size:21px;color:#666;letter-spacing:-0.7px">XRP</div>
<div class="a" style="left:776px;top:802px;line-height:70px;font-size:21px;color:#666;letter-spacing:-0.7px">0.…</div>
<div class="a" style="left:867px;top:802px;line-height:70px;font-size:21px;color:#666;letter-spacing:-0.7px">2.0000</div>
<div class="a" style="left:1018px;top:802px;line-height:70px;font-size:21px;color:#666;letter-spacing:-0.7px">7</div>
<div class="a" style="left:1109px;top:802px;line-height:70px;font-size:21px;color:#666;letter-spacing:-0.7px">XRP</div>
<div class="a" style="left:641px;top:825px;width:90px;height:27px;background:#009688;border-radius:3px;line-height:27px;text-align:center;font-size:18px;color:#fff">加密货币</div>
<div class="a" style="left:1231px;top:822px;width:74px;height:35px;background:#5fb878;border-radius:18px"></div>
<div class="a" style="left:1246px;top:822px;line-height:35px;font-size:18px;color:#fff">是</div>
<div class="a" style="left:1272px;top:827px;width:24px;height:24px;background:#fff;border-radius:50%"></div>
<div class="a" style="left:1352px;top:822px;width:74px;height:35px;background:#5fb878;border-radius:18px"></div>
<div class="a" style="left:1367px;top:822px;line-height:35px;font-size:18px;color:#fff">是</div>
<div class="a" style="left:1393px;top:827px;width:24px;height:24px;background:#fff;border-radius:50%"></div>
<div class="a" style="left:1473px;top:822px;width:74px;height:35px;background:#5fb878;border-radius:18px"></div>
<div class="a" style="left:1488px;top:822px;line-height:35px;font-size:18px;color:#fff">是</div>
<div class="a" style="left:1514px;top:827px;width:24px;height:24px;background:#fff;border-radius:50%"></div>
<div class="a" style="left:1609px;top:822px;width:74px;height:35px;background:#5fb878;border-radius:18px"></div>
<div class="a" style="left:1624px;top:822px;line-height:35px;font-size:18px;color:#fff">是</div>
<div class="a" style="left:1650px;top:827px;width:24px;height:24px;background:#fff;border-radius:50%"></div>
<div class="a" style="left:1752px;top:803px;width:77px;height:69px;overflow:hidden">
<div class="a" style="left:23px;top:19px;width:74px;height:35px;border:1px solid #d2d2d2;background:#fff;border-radius:18px"></div>
<div class="a" style="left:31px;top:24px;width:24px;height:24px;background:#d2d2d2;border-radius:50%"></div>
<div class="a" style="left:63px;top:19px;line-height:35px;font-size:18px;color:#999">否</div>
</div>
<div class="a" style="left:1852px;top:822px;width:74px;height:35px;background:#5fb878;border-radius:18px"></div>
<div class="a" style="left:1867px;top:822px;line-height:35px;font-size:18px;color:#fff">是</div>
<div class="a" style="left:1894px;top:827px;width:24px;height:24px;background:#fff;border-radius:50%"></div>
<div class="a" style="left:1981px;top:823px;width:51px;height:33px;background:#7b6cf5;border-radius:9px;line-height:32px;text-align:center;font-size:18px;font-weight:bold;color:#fff;-webkit-text-stroke:0.5px #fff">编辑</div>
<div class="a" style="left:2052px;top:823px;width:69px;height:33px;background:#1e9fff;border-radius:9px;line-height:32px;text-align:center;font-size:18px;font-weight:bold;color:#fff;-webkit-text-stroke:0.5px #fff">交易对</div>
<div class="a" style="left:2141px;top:823px;width:105px;height:33px;background:#7b6cf5;border-radius:9px;line-height:32px;text-align:center;font-size:18px;font-weight:bold;color:#fff;-webkit-text-stroke:0.5px #fff">交易对编辑</div>
<div class="a" style="left:413px;top:872px;line-height:70px;font-size:21px;color:#666;letter-spacing:-0.7px">6</div>
<div class="a" style="left:504px;top:872px;line-height:70px;font-size:21px;color:#666;letter-spacing:-0.7px">LTC</div>
<div class="a" style="left:776px;top:872px;line-height:70px;font-size:21px;color:#666;letter-spacing:-0.7px">1.…</div>
<div class="a" style="left:867px;top:872px;line-height:70px;font-size:21px;color:#666;letter-spacing:-0.7px">2.0000</div>
<div class="a" style="left:1018px;top:872px;line-height:70px;font-size:21px;color:#666;letter-spacing:-0.7px">8</div>
<div class="a" style="left:1109px;top:872px;line-height:70px;font-size:21px;color:#666;letter-spacing:-0.7px">LTC</div>
<div class="a" style="left:641px;top:895px;width:90px;height:27px;background:#009688;border-radius:3px;line-height:27px;text-align:center;font-size:18px;color:#fff">加密货币</div>
<div class="a" style="left:1231px;top:892px;width:74px;height:35px;background:#5fb878;border-radius:18px"></div>
<div class="a" style="left:1246px;top:892px;line-height:35px;font-size:18px;color:#fff">是</div>
<div class="a" style="left:1272px;top:897px;width:24px;height:24px;background:#fff;border-radius:50%"></div>
<div class="a" style="left:1352px;top:892px;width:74px;height:35px;background:#5fb878;border-radius:18px"></div>
<div class="a" style="left:1367px;top:892px;line-height:35px;font-size:18px;color:#fff">是</div>
<div class="a" style="left:1393px;top:897px;width:24px;height:24px;background:#fff;border-radius:50%"></div>
<div class="a" style="left:1473px;top:892px;width:74px;height:35px;background:#5fb878;border-radius:18px"></div>
<div class="a" style="left:1488px;top:892px;line-height:35px;font-size:18px;color:#fff">是</div>
<div class="a" style="left:1514px;top:897px;width:24px;height:24px;background:#fff;border-radius:50%"></div>
<div class="a" style="left:1609px;top:892px;width:74px;height:35px;background:#5fb878;border-radius:18px"></div>
<div class="a" style="left:1624px;top:892px;line-height:35px;font-size:18px;color:#fff">是</div>
<div class="a" style="left:1650px;top:897px;width:24px;height:24px;background:#fff;border-radius:50%"></div>
<div class="a" style="left:1752px;top:873px;width:77px;height:69px;overflow:hidden">
<div class="a" style="left:23px;top:19px;width:74px;height:35px;border:1px solid #d2d2d2;background:#fff;border-radius:18px"></div>
<div class="a" style="left:31px;top:24px;width:24px;height:24px;background:#d2d2d2;border-radius:50%"></div>
<div class="a" style="left:63px;top:19px;line-height:35px;font-size:18px;color:#999">否</div>
</div>
<div class="a" style="left:1852px;top:892px;width:74px;height:35px;background:#5fb878;border-radius:18px"></div>
<div class="a" style="left:1867px;top:892px;line-height:35px;font-size:18px;color:#fff">是</div>
<div class="a" style="left:1894px;top:897px;width:24px;height:24px;background:#fff;border-radius:50%"></div>
<div class="a" style="left:1981px;top:893px;width:51px;height:33px;background:#7b6cf5;border-radius:9px;line-height:32px;text-align:center;font-size:18px;font-weight:bold;color:#fff;-webkit-text-stroke:0.5px #fff">编辑</div>
<div class="a" style="left:2052px;top:893px;width:69px;height:33px;background:#1e9fff;border-radius:9px;line-height:32px;text-align:center;font-size:18px;font-weight:bold;color:#fff;-webkit-text-stroke:0.5px #fff">交易对</div>
<div class="a" style="left:2141px;top:893px;width:105px;height:33px;background:#7b6cf5;border-radius:9px;line-height:32px;text-align:center;font-size:18px;font-weight:bold;color:#fff;-webkit-text-stroke:0.5px #fff">交易对编辑</div>
<div class="a" style="left:413px;top:942px;line-height:70px;font-size:21px;color:#666;letter-spacing:-0.7px">10…</div>
<div class="a" style="left:504px;top:942px;line-height:70px;font-size:21px;color:#666;letter-spacing:-0.7px">ADA</div>
<div class="a" style="left:776px;top:942px;line-height:70px;font-size:21px;color:#666;letter-spacing:-0.7px">0.…</div>
<div class="a" style="left:867px;top:942px;line-height:70px;font-size:21px;color:#666;letter-spacing:-0.7px">2.0000</div>
<div class="a" style="left:1018px;top:942px;line-height:70px;font-size:21px;color:#666;letter-spacing:-0.7px">9</div>
<div class="a" style="left:1109px;top:942px;line-height:70px;font-size:21px;color:#666;letter-spacing:-0.7px">Ether…</div>
<div class="a" style="left:641px;top:965px;width:90px;height:27px;background:#009688;border-radius:3px;line-height:27px;text-align:center;font-size:18px;color:#fff">加密货币</div>
<div class="a" style="left:1231px;top:962px;width:74px;height:35px;background:#5fb878;border-radius:18px"></div>
<div class="a" style="left:1246px;top:962px;line-height:35px;font-size:18px;color:#fff">是</div>
<div class="a" style="left:1272px;top:967px;width:24px;height:24px;background:#fff;border-radius:50%"></div>
<div class="a" style="left:1352px;top:962px;width:74px;height:35px;background:#5fb878;border-radius:18px"></div>
<div class="a" style="left:1367px;top:962px;line-height:35px;font-size:18px;color:#fff">是</div>
<div class="a" style="left:1393px;top:967px;width:24px;height:24px;background:#fff;border-radius:50%"></div>
<div class="a" style="left:1473px;top:962px;width:74px;height:35px;background:#5fb878;border-radius:18px"></div>
<div class="a" style="left:1488px;top:962px;line-height:35px;font-size:18px;color:#fff">是</div>
<div class="a" style="left:1514px;top:967px;width:24px;height:24px;background:#fff;border-radius:50%"></div>
<div class="a" style="left:1609px;top:962px;width:74px;height:35px;background:#5fb878;border-radius:18px"></div>
<div class="a" style="left:1624px;top:962px;line-height:35px;font-size:18px;color:#fff">是</div>
<div class="a" style="left:1650px;top:967px;width:24px;height:24px;background:#fff;border-radius:50%"></div>
<div class="a" style="left:1752px;top:943px;width:77px;height:69px;overflow:hidden">
<div class="a" style="left:23px;top:19px;width:74px;height:35px;border:1px solid #d2d2d2;background:#fff;border-radius:18px"></div>
<div class="a" style="left:31px;top:24px;width:24px;height:24px;background:#d2d2d2;border-radius:50%"></div>
<div class="a" style="left:63px;top:19px;line-height:35px;font-size:18px;color:#999">否</div>
</div>
<div class="a" style="left:1852px;top:962px;width:74px;height:35px;background:#5fb878;border-radius:18px"></div>
<div class="a" style="left:1867px;top:962px;line-height:35px;font-size:18px;color:#fff">是</div>
<div class="a" style="left:1894px;top:967px;width:24px;height:24px;background:#fff;border-radius:50%"></div>
<div class="a" style="left:1981px;top:963px;width:51px;height:33px;background:#7b6cf5;border-radius:9px;line-height:32px;text-align:center;font-size:18px;font-weight:bold;color:#fff;-webkit-text-stroke:0.5px #fff">编辑</div>
<div class="a" style="left:2052px;top:963px;width:105px;height:33px;background:#7b6cf5;border-radius:9px;line-height:32px;text-align:center;font-size:18px;font-weight:bold;color:#fff;-webkit-text-stroke:0.5px #fff">交易对编辑</div>
<div class="a" style="left:413px;top:1012px;line-height:70px;font-size:21px;color:#666;letter-spacing:-0.7px">15</div>
<div class="a" style="left:504px;top:1012px;line-height:70px;font-size:21px;color:#666;letter-spacing:-0.7px">FIL</div>
<div class="a" style="left:776px;top:1012px;line-height:70px;font-size:21px;color:#666;letter-spacing:-0.7px">0.…</div>
<div class="a" style="left:867px;top:1012px;line-height:70px;font-size:21px;color:#666;letter-spacing:-0.7px">2.0000</div>
<div class="a" style="left:1018px;top:1012px;line-height:70px;font-size:21px;color:#666;letter-spacing:-0.7px">10</div>
<div class="a" style="left:1109px;top:1012px;line-height:70px;font-size:21px;color:#666;letter-spacing:-0.7px">IOTA</div>
<div class="a" style="left:641px;top:1035px;width:90px;height:27px;background:#009688;border-radius:3px;line-height:27px;text-align:center;font-size:18px;color:#fff">加密货币</div>
<div class="a" style="left:1231px;top:1032px;width:74px;height:35px;background:#5fb878;border-radius:18px"></div>
<div class="a" style="left:1246px;top:1032px;line-height:35px;font-size:18px;color:#fff">是</div>
<div class="a" style="left:1272px;top:1037px;width:24px;height:24px;background:#fff;border-radius:50%"></div>
<div class="a" style="left:1352px;top:1032px;width:74px;height:35px;background:#5fb878;border-radius:18px"></div>
<div class="a" style="left:1367px;top:1032px;line-height:35px;font-size:18px;color:#fff">是</div>
<div class="a" style="left:1393px;top:1037px;width:24px;height:24px;background:#fff;border-radius:50%"></div>
<div class="a" style="left:1473px;top:1032px;width:74px;height:35px;background:#5fb878;border-radius:18px"></div>
<div class="a" style="left:1488px;top:1032px;line-height:35px;font-size:18px;color:#fff">是</div>
<div class="a" style="left:1514px;top:1037px;width:24px;height:24px;background:#fff;border-radius:50%"></div>
<div class="a" style="left:1609px;top:1032px;width:74px;height:35px;background:#5fb878;border-radius:18px"></div>
<div class="a" style="left:1624px;top:1032px;line-height:35px;font-size:18px;color:#fff">是</div>
<div class="a" style="left:1650px;top:1037px;width:24px;height:24px;background:#fff;border-radius:50%"></div>
<div class="a" style="left:1752px;top:1013px;width:77px;height:69px;overflow:hidden">
<div class="a" style="left:23px;top:19px;width:74px;height:35px;border:1px solid #d2d2d2;background:#fff;border-radius:18px"></div>
<div class="a" style="left:31px;top:24px;width:24px;height:24px;background:#d2d2d2;border-radius:50%"></div>
<div class="a" style="left:63px;top:19px;line-height:35px;font-size:18px;color:#999">否</div>
</div>
<div class="a" style="left:1852px;top:1032px;width:74px;height:35px;background:#5fb878;border-radius:18px"></div>
<div class="a" style="left:1867px;top:1032px;line-height:35px;font-size:18px;color:#fff">是</div>
<div class="a" style="left:1894px;top:1037px;width:24px;height:24px;background:#fff;border-radius:50%"></div>
<div class="a" style="left:1981px;top:1033px;width:51px;height:33px;background:#7b6cf5;border-radius:9px;line-height:32px;text-align:center;font-size:18px;font-weight:bold;color:#fff;-webkit-text-stroke:0.5px #fff">编辑</div>
<div class="a" style="left:2052px;top:1033px;width:69px;height:33px;background:#1e9fff;border-radius:9px;line-height:32px;text-align:center;font-size:18px;font-weight:bold;color:#fff;-webkit-text-stroke:0.5px #fff">交易对</div>
<div class="a" style="left:2141px;top:1033px;width:105px;height:33px;background:#7b6cf5;border-radius:9px;line-height:32px;text-align:center;font-size:18px;font-weight:bold;color:#fff;-webkit-text-stroke:0.5px #fff">交易对编辑</div>
<svg style="left:415px;top:1103px" width="12" height="19" viewBox="0 0 12 19"><path d="M11 1 L2 9.5 L11 18" fill="none" stroke="#c2c2c2" stroke-width="1.8"/></svg>
<div class="a" style="left:450px;top:1093px;width:76px;height:39px;background:#f2f2f2;border-radius:6px"></div>
<div class="a" style="left:475px;top:1093px;line-height:39px;font-size:18px;color:#999">1</div>
<div class="a" style="left:526px;top:1093px;line-height:39px;font-size:18px;color:#01aaed">2</div>
<div class="a" style="left:571px;top:1093px;line-height:39px;font-size:18px;color:#01aaed">3</div>
<div class="a" style="left:631px;top:1093px;line-height:39px;font-size:18px;color:#01aaed">7</div>
<div class="a" style="left:598px;top:1093px;line-height:39px;font-size:18px;color:#666">…</div>
<svg style="left:683px;top:1102px" width="12" height="19" viewBox="0 0 12 19"><path d="M1 1 L10 9.5 L1 18" fill="none" stroke="#01aaed" stroke-width="1.8"/></svg>
<div class="a" style="left:717px;top:1093px;line-height:39px;font-size:18px;color:#999">到第</div>
<div class="a" style="left:769px;top:1093px;width:60px;height:39px;border:1px solid #e2e2e2;border-radius:3px;line-height:37px;text-align:center;font-size:18px;color:#333">1</div>
<div class="a" style="left:843px;top:1093px;line-height:39px;font-size:18px;color:#999">页</div>
<div class="a" style="left:877px;top:1093px;width:68px;height:39px;border:1px solid #e2e2e2;border-radius:3px;line-height:37px;text-align:center;font-size:18px;color:#333">确定</div>
<div class="a" style="left:959px;top:1093px;line-height:39px;font-size:18px;color:#333">共 68 条</div>
<div class="a" style="left:1041px;top:1093px;width:108px;height:38px;border:1px solid #e2e2e2;border-radius:4px;background:#fff"></div>
<div class="a" style="left:1052px;top:1093px;line-height:38px;font-size:18px;color:#222">10 条/页</div>
<svg style="left:1129px;top:1108px" width="14" height="9" viewBox="0 0 14 9"><path d="M1.5 1.5 L7 7 L12.5 1.5" fill="none" stroke="#111" stroke-width="2.6"/></svg>
<div class="a" style="left:2538px;top:159px;width:22px;height:1040px;background:#fcfcfc"></div>
<svg style="left:2542px;top:167px" width="15" height="8" viewBox="0 0 15 8"><path d="M0 8 L7.5 0 L15 8 Z" fill="#8a8a8a"/></svg>
<div class="a" style="left:2543px;top:186px;width:13px;height:973px;background:#8a8a8a;border-radius:7px"></div>
<svg style="left:2542px;top:1185px" width="15" height="8" viewBox="0 0 15 8"><path d="M0 0 L15 0 L7.5 8 Z" fill="#8a8a8a"/></svg>
</body></html>
